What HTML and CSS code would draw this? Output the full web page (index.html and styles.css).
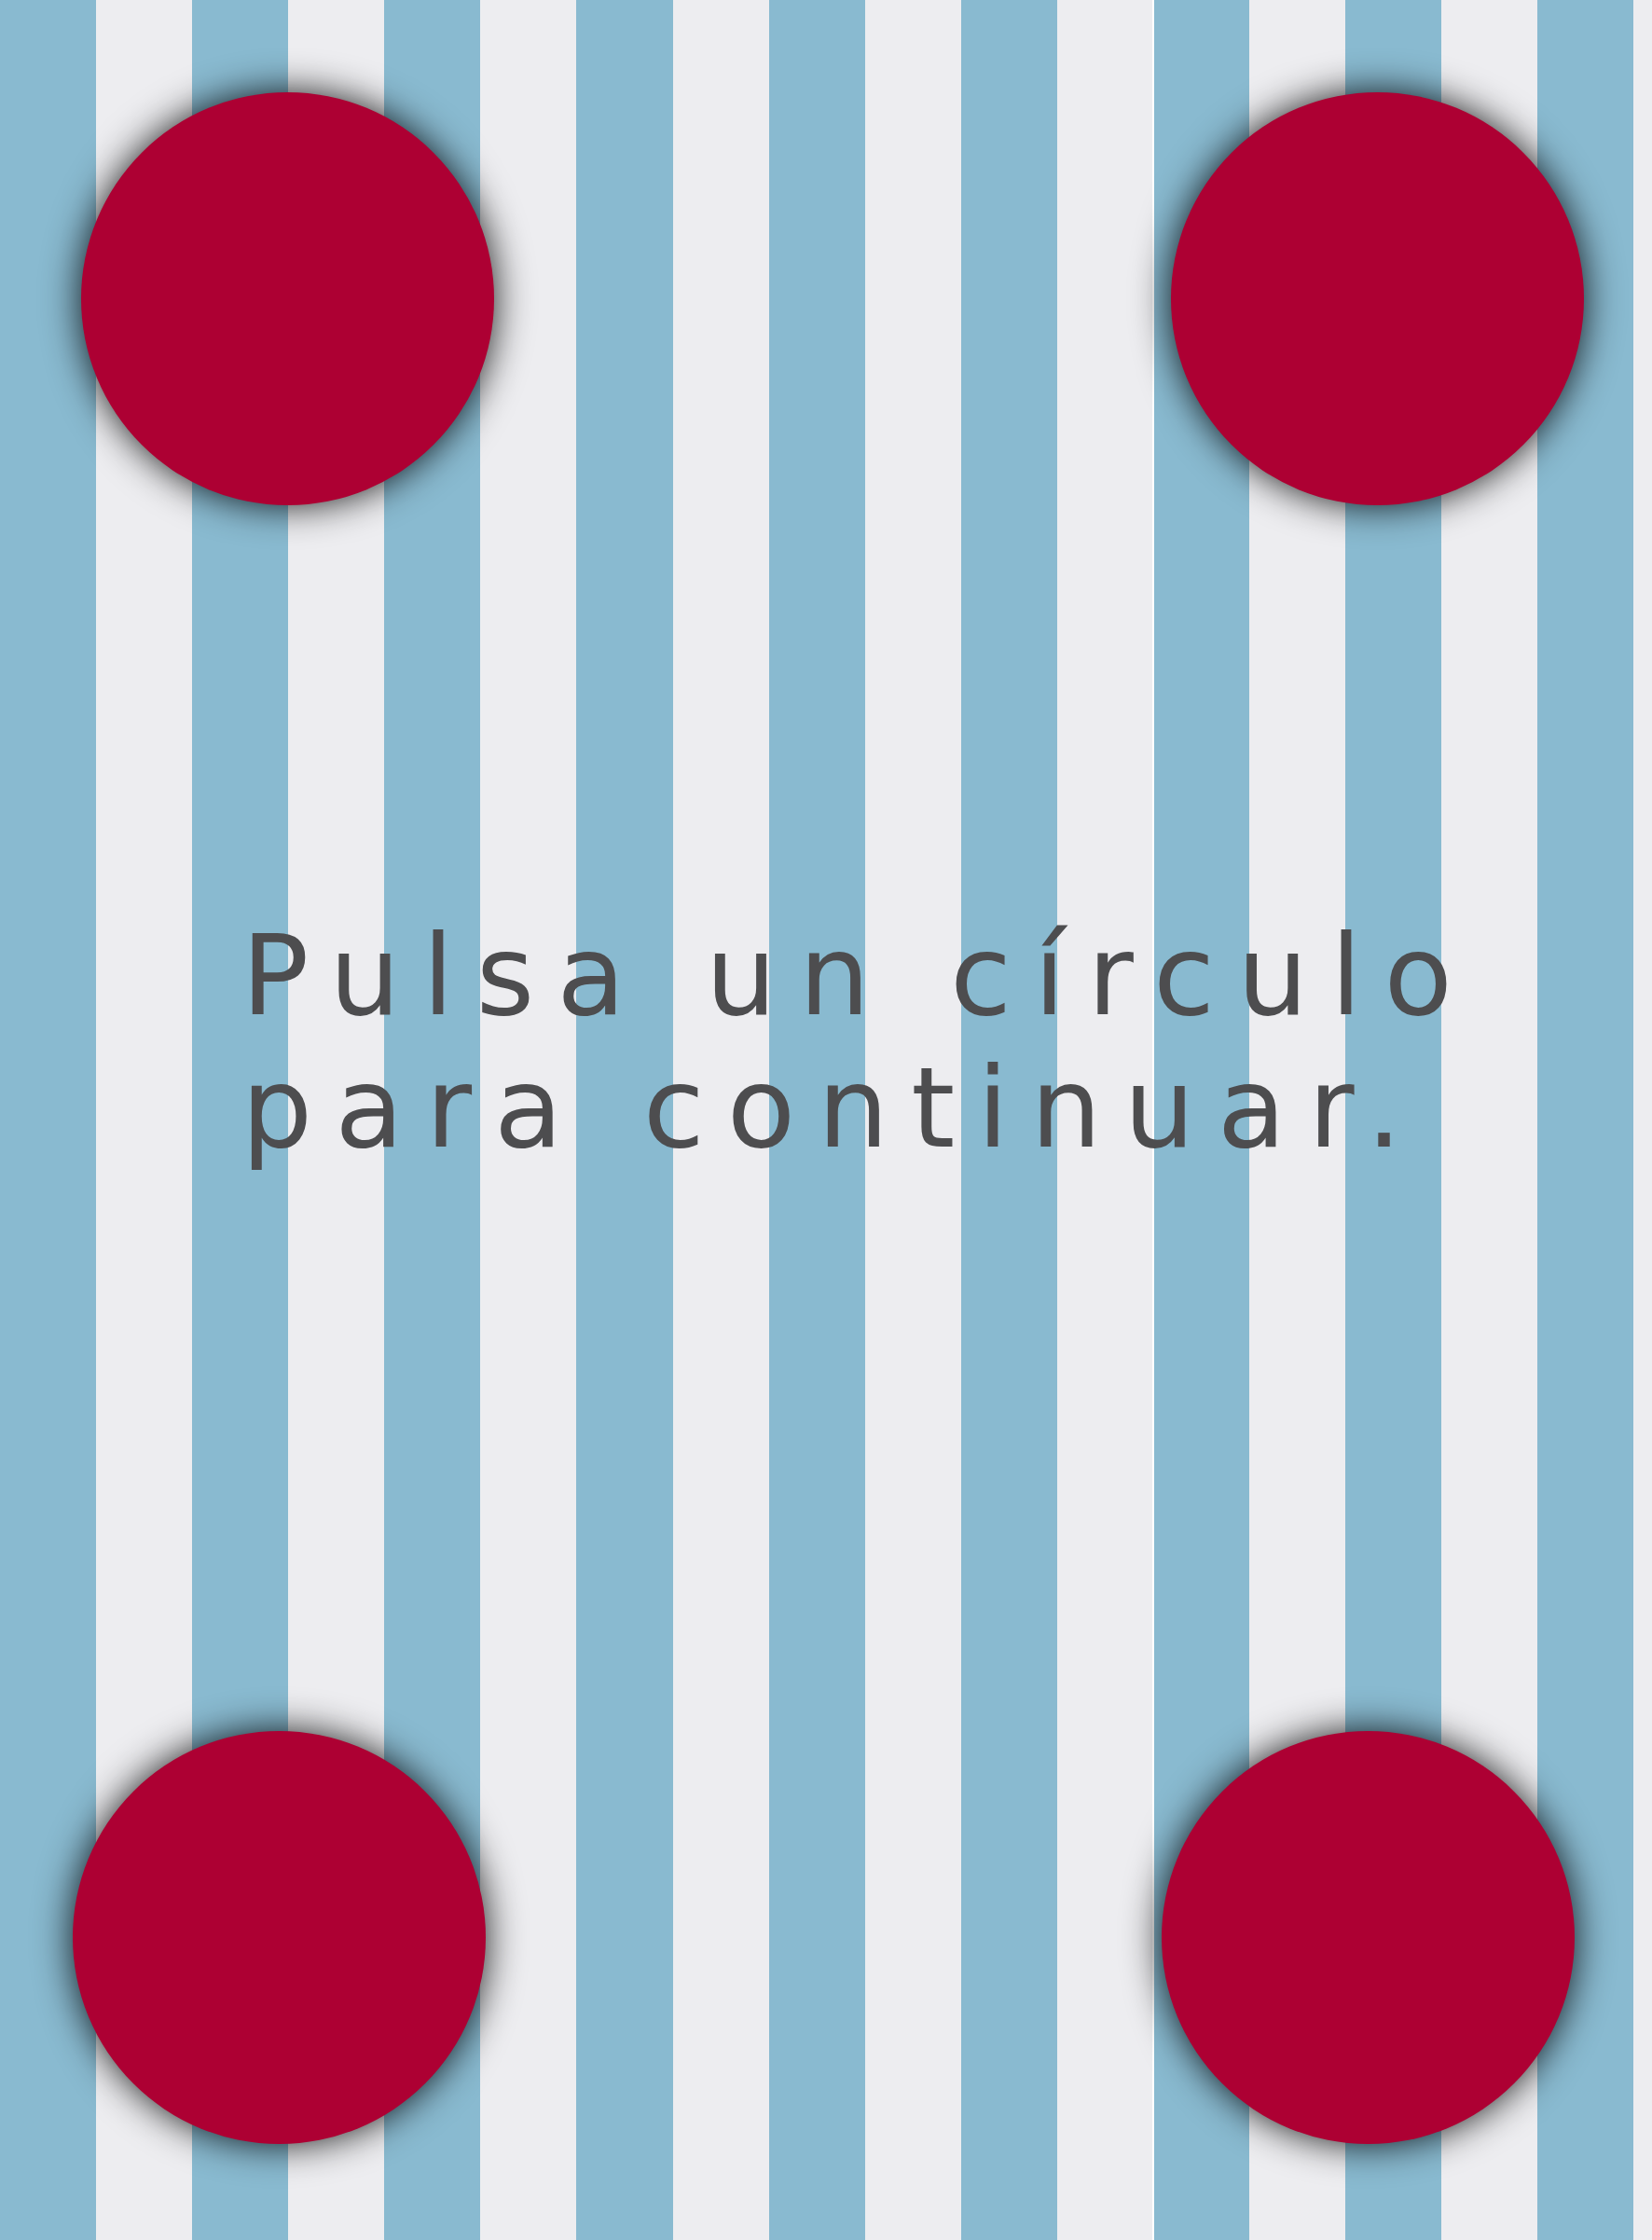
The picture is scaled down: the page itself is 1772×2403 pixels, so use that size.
FILE: index.html
```html
<!DOCTYPE html>
<html lang="es">
<head>
<meta charset="utf-8">
<title>Pulsa un círculo</title>
<link rel="stylesheet" href="styles.css">
</head>
<body>
<main class="screen">
  <div class="row row-top">
    <button class="dot" aria-label="Círculo superior izquierdo"></button>
    <button class="dot" aria-label="Círculo superior derecho"></button>
  </div>
  <p class="message"><span class="line">Pulsa un círculo</span><span class="line">para continuar.</span></p>
  <div class="row row-bottom">
    <button class="dot" aria-label="Círculo inferior izquierdo"></button>
    <button class="dot" aria-label="Círculo inferior derecho"></button>
  </div>
</main>
</body>
</html>
```

FILE: styles.css
```css
html, body {
  margin: 0;
  padding: 0;
}

body {
  background: #ededf0;
}

.screen {
  height: 2403px;
  overflow: hidden;
  display: flex;
  flex-direction: column;
  background:
    linear-gradient(90deg, transparent 1236px, #ffffff 1236px, #ffffff 1238px, transparent 1238px),
    repeating-linear-gradient(90deg, #89bad0 0, #89bad0 103.075px, #ededf0 103.075px, #ededf0 206.15px);
}

.row {
  display: flex;
  justify-content: space-between;
  align-items: flex-start;
}

.row-top {
  padding: 99px 73px 0 87px;
}

.row-bottom {
  margin-top: auto;
  padding: 0 83px 103px 78px;
}

.dot {
  display: block;
  width: 443px;
  height: 443px;
  padding: 0;
  border: none;
  border-radius: 50%;
  background: #ad0033;
  box-shadow: 0 0 40px rgba(0, 0, 0, 0.9);
  cursor: pointer;
}

.message {
  margin: 434px 0 0 0;
  padding-left: 259px;
  font-family: "DejaVu Sans", "Verdana", sans-serif;
  font-size: 120px;
  line-height: 142px;
  letter-spacing: 24px;
  color: #4d4d4f;
}

.line {
  display: block;
  white-space: nowrap;
}
```
